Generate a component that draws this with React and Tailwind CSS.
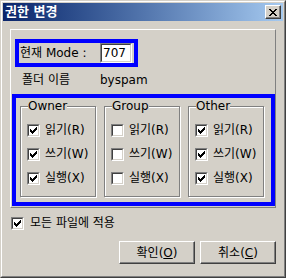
const FONT = "font-['DejaVu_Sans','Noto_Sans_CJK_KR',sans-serif]";

function CheckMark() {
  return (
    <svg width="7" height="7" viewBox="0 0 7 7" shapeRendering="crispEdges">
      <path
        fill="#000"
        d="M0 2h1v3h-1z M1 3h1v3h-1z M2 4h1v3h-1z M3 3h1v3h-1z M4 2h1v3h-1z M5 1h1v3h-1z M6 0h1v3h-1z"
      />
    </svg>
  );
}

function Check({ checked }) {
  return (
    <span className="flex h-[13px] w-[13px] shrink-0 border border-t-[#808080] border-l-[#808080] border-r-white border-b-white">
      <span className="flex flex-1 items-start border border-t-[#404040] border-l-[#404040] border-r-[#d4d0c8] border-b-[#d4d0c8] bg-white p-[1px]">
        {checked && <CheckMark />}
      </span>
    </span>
  );
}

function Row({ checked, label }) {
  return (
    <div className="flex h-[24px] items-center gap-[5px]">
      <Check checked={checked} />
      <span className="leading-[14px]">{label}</span>
    </div>
  );
}

function Group({ title, values }) {
  const labels = ['읽기(R)', '쓰기(W)', '실행(X)'];
  return (
    <fieldset className="w-[76px] border border-[#808080] pt-[5px] pb-[6px] pl-[6px] shadow-[inset_1px_1px_0_#fff,1px_1px_0_#fff]">
      <legend className="ml-[1px] bg-[#d4d0c8] leading-[14px]">{title}</legend>
      {labels.map((label, i) => (
        <Row key={label} checked={values[i]} label={label} />
      ))}
    </fieldset>
  );
}

function Button({ children }) {
  return (
    <button
      type="button"
      className="flex h-[23px] w-[76px] items-center justify-center border border-t-white border-l-white border-r-[#404040] border-b-[#404040] bg-[#d4d0c8] leading-[14px] shadow-[inset_-1px_-1px_0_#808080]"
    >
      {children}
    </button>
  );
}

export default function App() {
  return (
    <div className={`${FONT} h-[278px] w-[286px] border border-t-[#d4d0c8] border-l-[#d4d0c8] border-r-[#404040] border-b-[#404040] bg-[#d4d0c8] text-[12px] text-black`}>
      <div className="flex h-full flex-col border border-t-white border-l-white border-r-[#808080] border-b-[#808080] p-[1px]">
        {/* title bar */}
        <div className="flex h-[18px] shrink-0 items-center justify-between bg-linear-to-r from-[#0a246a] to-[#a6caf0] pl-[2px] pr-[2px]">
          <span className="text-[13px] leading-[16px] font-bold text-white">권한 변경</span>
          <div className="flex h-[14px] w-[16px] items-center justify-center border border-t-white border-l-white border-r-[#404040] border-b-[#404040] bg-[#d4d0c8] shadow-[inset_-1px_-1px_0_#808080]">
            <svg width="8" height="7" viewBox="0 0 8 7" shapeRendering="crispEdges">
              <path
                fill="#000"
                d="M0 0h2v1h-2z M6 0h2v1h-2z M1 1h2v1h-2z M5 1h2v1h-2z M2 2h4v1h-4z M3 3h2v1h-2z M2 4h4v1h-4z M1 5h2v1h-2z M5 5h2v1h-2z M0 6h2v1h-2z M6 6h2v1h-2z"
              />
            </svg>
          </div>
        </div>

        {/* main panel */}
        <div className="mt-[8px] ml-[7px] w-[266px] border border-t-white border-l-white border-r-[#808080] border-b-[#808080] pb-[1px]">
          <div className="mt-[9px] ml-[4px] flex h-[28px] w-[123px] items-center border-4 border-[#0000ff] pl-[1px]">
            <span className="w-[80px] leading-[14px]">현재 Mode :</span>
            <div className="flex h-[20px] w-[32px] border border-t-[#808080] border-l-[#808080] border-r-white border-b-white">
              <div className="flex flex-1 items-center border border-t-[#404040] border-l-[#404040] border-r-[#d4d0c8] border-b-[#d4d0c8] bg-white pl-[1px] leading-[14px]">
                707
              </div>
            </div>
          </div>

          <div className="mt-[6px] flex pl-[11px] leading-[14px]">
            <span className="w-[78px]">폴더 이름</span>
            <span>byspam</span>
          </div>

          <div className="mt-[7px] ml-[1px] flex w-[263px] gap-[8px] border-4 border-[#0000ff] pt-[1px] pb-[5px] pl-[4px]">
            <Group title="Owner" values={[true, true, true]} />
            <Group title="Group" values={[false, false, false]} />
            <Group title="Other" values={[true, true, true]} />
          </div>
        </div>

        {/* apply to all */}
        <div className="mt-[8px] ml-[8px] flex items-center gap-[6px]">
          <Check checked />
          <span className="leading-[14px]">모든 파일에 적용</span>
        </div>

        {/* buttons */}
        <div className="mt-[11px] mr-[7px] flex justify-end gap-[5px]">
          <Button>
            확인(<span className="underline">O</span>)
          </Button>
          <Button>
            취소(<span className="underline">C</span>)
          </Button>
        </div>
      </div>
    </div>
  );
}
